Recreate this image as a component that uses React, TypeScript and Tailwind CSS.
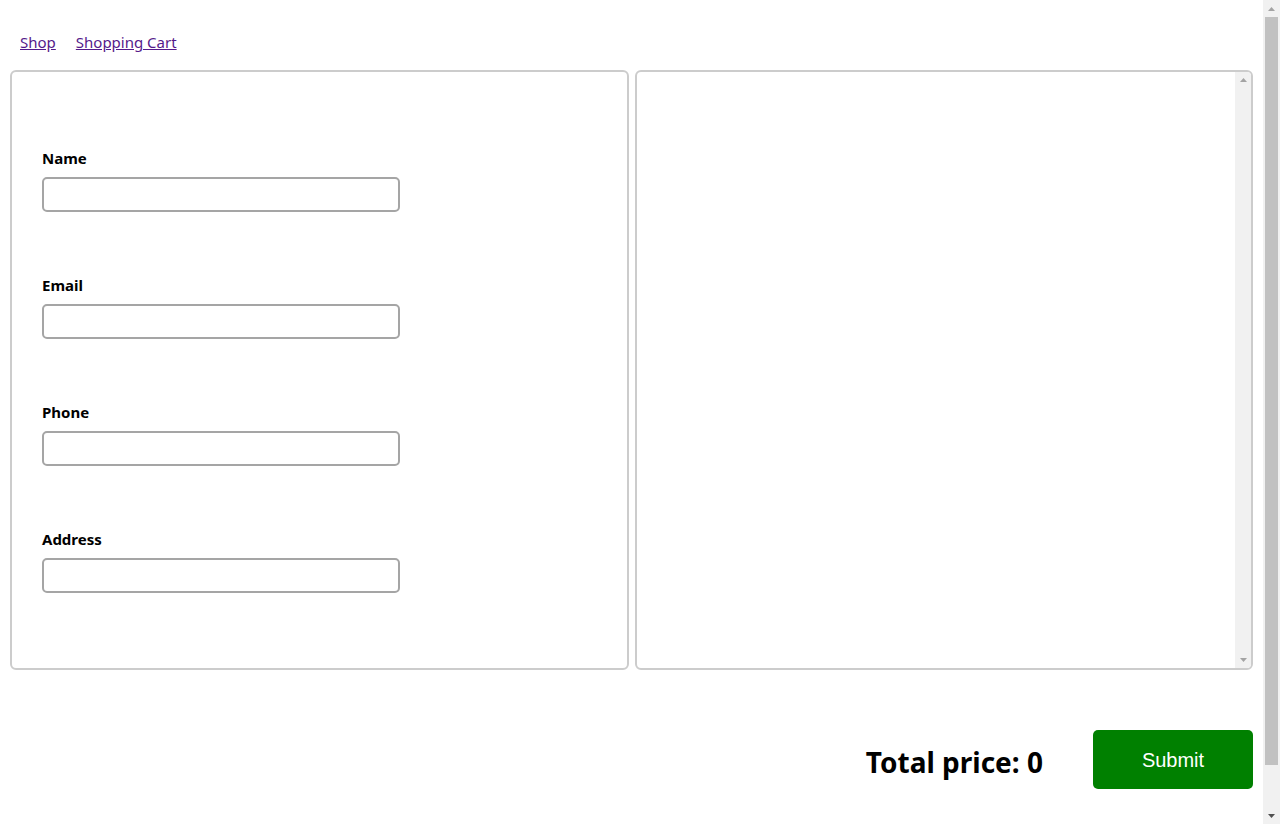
import React from "react";

const fields = ["Name", "Email", "Phone", "Address"];

function Up({ color }: { color: string }) {
  return (
    <svg width="7" height="4" viewBox="0 0 7 4" className="block">
      <polygon points="3.5,0 7,4 0,4" fill={color} />
    </svg>
  );
}
function Down({ color }: { color: string }) {
  return (
    <svg width="7" height="4" viewBox="0 0 7 4" className="block">
      <polygon points="0,0 7,0 3.5,4" fill={color} />
    </svg>
  );
}

export default function App() {
  return (
    <div className="flex h-[824px] overflow-hidden bg-white text-black" style={{ fontFamily: '"Noto Sans", "Open Sans", sans-serif' }}>
      <div className="w-[1263px] shrink-0 px-[10px]">
        <nav className="flex gap-[20px] pl-[10px] pt-[30px] h-[70px] text-[15px] leading-[24px]">
          <a href="#" className="text-[#551a8b] underline">Shop</a>
          <a href="#" className="text-[#551a8b] underline">Shopping Cart</a>
        </nav>
        <div className="grid grid-cols-2 gap-[6px]">
          <div className="h-[600px] rounded-md border-2 border-[#cccccc] px-[30px] pt-[76px]">
            {fields.map((f) => (
              <div key={f} className="flex flex-col">
                <label className="text-[15px] font-bold leading-[20px] mb-[9px]">{f}</label>
                <input className="w-[358px] h-[35px] rounded-[5px] border-2 border-[#a5a5a5] mb-[63px] outline-none" />
              </div>
            ))}
          </div>
          <div className="h-[600px] rounded-md border-2 border-[#cccccc] flex justify-end overflow-hidden">
            <div className="w-[16px] h-full bg-[#f1f1f1] flex flex-col items-center justify-between py-[6px]">
              <Up color="#a3a3a3" />
              <Down color="#a3a3a3" />
            </div>
          </div>
        </div>
        <div className="flex justify-end items-center mt-[60px] gap-[50px]">
          <div className="text-[28px] font-bold leading-[40px] mt-[4px]">Total price: 0</div>
          <button
            className="w-[160px] h-[59px] rounded-[5px] bg-[#008000] text-white text-[20px]"
            style={{ fontFamily: '"Liberation Sans", Arial, sans-serif' }}
          >
            Submit
          </button>
        </div>
      </div>
      <div className="w-[17px] h-full bg-[#f1f1f1] flex flex-col items-center">
        <div className="h-[17px] flex items-center justify-center">
          <Up color="#a3a3a3" />
        </div>
        <div className="w-[13px] h-[748px] bg-[#c1c1c1]"></div>
        <div className="flex-1 flex items-end justify-center pb-[6px]">
          <Down color="#505050" />
        </div>
      </div>
    </div>
  );
}
